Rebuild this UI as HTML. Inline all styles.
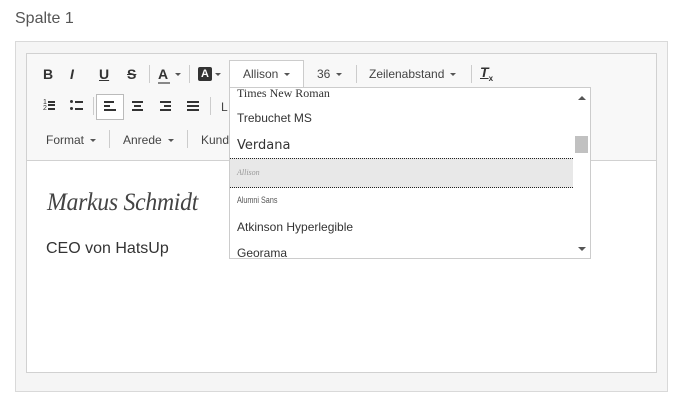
<!DOCTYPE html><html><head><style>
*{box-sizing:border-box;margin:0;padding:0}
body{width:683px;height:408px;background:#fff;font-family:"Liberation Sans",Arial,sans-serif;position:relative;overflow:hidden;color:#333}
.a{position:absolute}
.t{font-size:12px;color:#444;white-space:nowrap}
.sep{position:absolute;width:1px;height:18px;background:#ccc}
.car{display:inline-block;border-left:3px solid transparent;border-right:3px solid transparent;border-top:3px solid #555;vertical-align:middle;margin-left:6px}
.bar{position:absolute;height:2px;background:#333}
</style></head><body>
<div class="a" style="left:15px;top:10px;font-size:16px;color:#555">Spalte 1</div>
<div class="a" style="left:15px;top:41px;width:653px;height:351px;border:1px solid #d9d9d9;background:#f5f5f5"></div>
<div class="a" style="left:26px;top:53px;width:631px;height:320px;border:1px solid #d1d1d1;background:#fff"></div>
<div class="a" style="left:27px;top:54px;width:629px;height:107px;background:#f8f8f8;border-bottom:1px solid #d1d1d1"></div>
<!-- row1 -->
<div class="a" style="left:43px;top:66px;font-weight:bold;font-size:14px;color:#333">B</div>
<div class="a" style="left:70px;top:66px;font-style:italic;font-weight:bold;font-size:14px;color:#333">I</div>
<div class="a" style="left:99px;top:66px;font-weight:bold;font-size:14px;color:#333;text-decoration:underline">U</div>
<div class="a" style="left:127px;top:66px;font-weight:bold;font-size:14px;color:#333;text-decoration:line-through">S</div>
<div class="sep" style="left:149px;top:65px"></div>
<div class="a" style="left:158px;top:66px;font-weight:bold;font-size:14px;color:#333">A</div><div class="bar" style="left:158px;top:82px;width:12px;background:#888"></div><span class="car a" style="left:169px;top:73px"></span>
<div class="sep" style="left:189px;top:65px"></div>
<div class="a" style="left:198px;top:67px;width:14px;height:14px;background:#333;color:#fff;font-size:11px;font-weight:bold;text-align:center;line-height:14px;border-radius:2px">A</div><span class="car a" style="left:209px;top:73px"></span>
<div class="a" style="left:229px;top:60px;width:75px;height:28px;border:1px solid #ccc;border-bottom:none;background:#fff"></div>
<div class="a t" style="left:243px;top:67px">Allison<span class="car"></span></div>
<div class="a t" style="left:317px;top:67px">36<span class="car"></span></div>
<div class="sep" style="left:356px;top:65px"></div>
<div class="a t" style="left:369px;top:67px">Zeilenabstand<span class="car"></span></div>
<div class="sep" style="left:471px;top:65px"></div>
<div class="a" style="left:480px;top:64px;font-style:italic;font-weight:bold;font-size:14px;text-decoration:underline;color:#333">T<sub style="font-size:8px;font-style:normal">x</sub></div>
<!-- row2 -->
<div class="a" style="left:43px;top:100px;font-size:7px;line-height:6px;color:#333">1<br>2</div>
<div class="bar" style="left:48px;top:101px;width:7px"></div><div class="bar" style="left:48px;top:104px;width:7px"></div><div class="bar" style="left:48px;top:108px;width:7px"></div>
<div class="a" style="left:70px;top:100px;width:3px;height:3px;border-radius:2px;background:#333"></div><div class="a" style="left:70px;top:107px;width:3px;height:3px;border-radius:2px;background:#333"></div>
<div class="bar" style="left:75px;top:101px;width:8px"></div><div class="bar" style="left:75px;top:108px;width:8px"></div>
<div class="sep" style="left:93px;top:97px"></div>
<div class="a" style="left:96px;top:94px;width:28px;height:26px;border:1px solid #bbb;background:#fff"></div>
<div class="bar" style="left:104px;top:101px;width:10px"></div><div class="bar" style="left:104px;top:105px;width:6px"></div><div class="bar" style="left:104px;top:109px;width:12px"></div>
<div class="bar" style="left:132px;top:101px;width:11px"></div><div class="bar" style="left:134px;top:105px;width:7px"></div><div class="bar" style="left:132px;top:109px;width:11px"></div>
<div class="bar" style="left:160px;top:101px;width:11px"></div><div class="bar" style="left:164px;top:105px;width:7px"></div><div class="bar" style="left:160px;top:109px;width:11px"></div>
<div class="bar" style="left:187px;top:101px;width:12px"></div><div class="bar" style="left:187px;top:105px;width:12px"></div><div class="bar" style="left:187px;top:109px;width:12px"></div>
<div class="sep" style="left:210px;top:97px"></div>
<div class="a t" style="left:221px;top:100px">L</div>
<!-- row3 -->
<div class="a t" style="left:46px;top:133px">Format<span class="car"></span></div>
<div class="sep" style="left:109px;top:130px"></div>
<div class="a t" style="left:123px;top:133px">Anrede<span class="car"></span></div>
<div class="sep" style="left:187px;top:130px"></div>
<div class="a t" style="left:201px;top:133px">Kund</div>
<!-- content -->
<div class="a" style="left:47px;top:189px;font-family:'Liberation Serif',serif;font-style:italic;font-size:25px;color:#444;letter-spacing:-0.3px;transform:scaleX(.95);transform-origin:left">Markus Schmidt</div>
<div class="a" style="left:46px;top:240px;font-size:16px;color:#333">CEO von HatsUp</div>
<!-- dropdown -->
<div class="a" style="left:229px;top:87px;width:362px;height:172px;border:1px solid #ccc;background:#fff;overflow:hidden">
<div class="a" style="left:7px;top:-2px;font-family:'Liberation Serif',serif;font-size:12px;color:#333">Times New Roman</div>
<div class="a" style="left:7px;top:23px;font-size:12px;color:#333">Trebuchet MS</div>
<div class="a" style="left:7px;top:50px;font-family:'DejaVu Sans',sans-serif;font-size:13px;color:#333">Verdana</div>
<div class="a" style="left:0;top:70px;width:343px;height:30px;background:#e8e8e8;border-top:1px dotted #222;border-bottom:1px dotted #222"></div>
<div class="a" style="left:7px;top:80px;font-family:'Liberation Serif',serif;font-style:italic;font-size:8px;color:#999">Allison</div>
<div class="a" style="left:7px;top:107px;font-size:9px;color:#555;transform:scaleX(.8);transform-origin:left">Alumni Sans</div>
<div class="a" style="left:7px;top:132px;font-size:12px;color:#333">Atkinson Hyperlegible</div>
<div class="a" style="left:7px;top:158px;font-size:12px;color:#333">Georama</div>
<div class="a" style="left:343px;top:0;width:18px;height:170px;background:#fff"></div>
<div class="a" style="left:348px;top:8px;border-left:4px solid transparent;border-right:4px solid transparent;border-bottom:4px solid #555"></div>
<div class="a" style="left:345px;top:48px;width:13px;height:17px;background:#c1c1c1"></div>
<div class="a" style="left:348px;top:159px;border-left:4px solid transparent;border-right:4px solid transparent;border-top:4px solid #555"></div>
</div>
</body></html>
